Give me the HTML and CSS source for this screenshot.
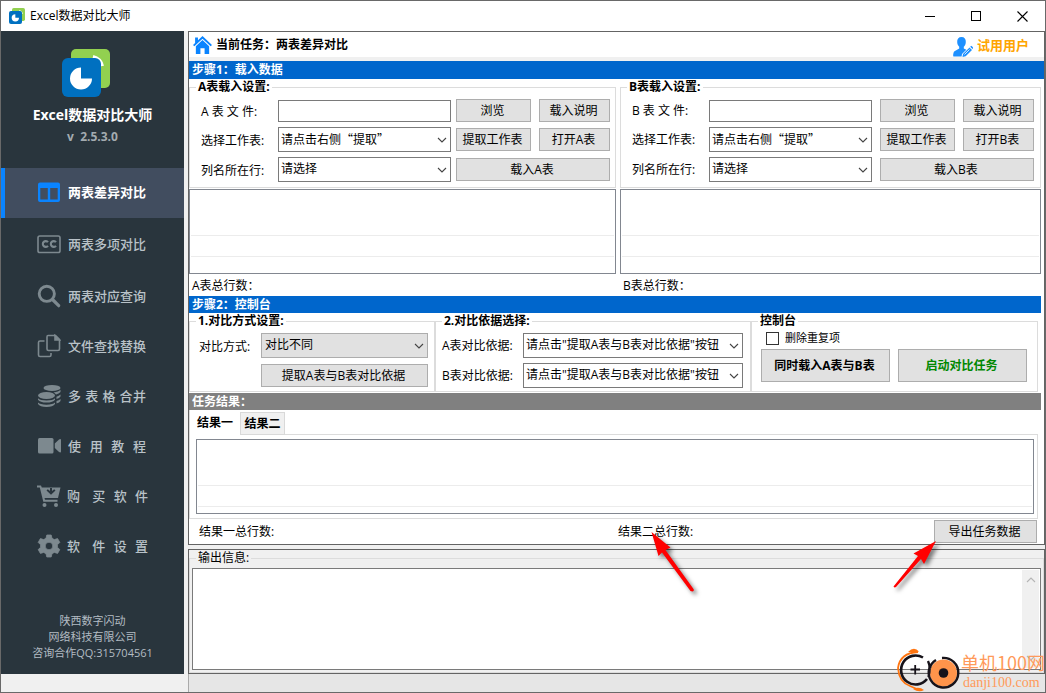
FILE: index.html
```
<!DOCTYPE html>
<html lang="zh-CN">
<head>
<meta charset="utf-8">
<title>Excel数据对比大师</title>
<link rel="stylesheet" href="styles.css">
</head>
<body>
<svg class="defs" width="0" height="0" aria-hidden="true">
  <symbol id="logo" viewBox="0 0 48 48">
    <rect x="9" y="0" width="39" height="39" rx="5" fill="#92d050"/>
    <path d="M31 7.500 A13 13 0 0 1 40.500 17" fill="none" stroke="#fff" stroke-width="3"/>
    <rect x="0" y="9" width="39" height="39" rx="6" fill="#0070c0"/>
    <path d="M19 18.500 V29.500 H30 A11 11 0 1 1 19 18.500Z" fill="#fff"/>
  </symbol>
  <symbol id="chevron" viewBox="0 0 10 6">
    <path d="M1 1 L5 5 L9 1" fill="none" stroke="currentColor" stroke-width="1.100"/>
  </symbol>
</svg>
<div class="window">
  <header class="titlebar">
    <svg class="app-icon"><use href="#logo"/></svg>
    <span class="app-name">Excel数据对比大师</span>
    <button class="win-btn" aria-label="最小化"><svg width="11" height="11" viewBox="0 0 11 11"><path d="M0 5.500H10" stroke="#000"/></svg></button>
    <button class="win-btn" aria-label="最大化"><svg width="11" height="11" viewBox="0 0 11 11"><rect x=".5" y=".5" width="9" height="9" fill="none" stroke="#000"/></svg></button>
    <button class="win-btn" aria-label="关闭"><svg width="11" height="11" viewBox="0 0 11 11"><path d="M.5.5l10 10M10.500.5l-10 10" stroke="#000" stroke-width="1.100"/></svg></button>
  </header>

  <div class="content">
    <div class="side-column">
    <aside class="sidebar">
      <svg class="logo"><use href="#logo"/></svg>
      <h1>Excel数据对比大师</h1>
      <p class="version">v&nbsp; 2.5.3.0</p>
      <nav>
        <a href="#" class="nav-item active">
          <svg viewBox="0 0 24 24"><path fill="#0a84ff" fill-rule="evenodd" d="M3 2.500H21Q23 2.500 23 4.500V20Q23 22 21 22H3Q1 22 1 20V4.500Q1 2.500 3 2.500ZM3.300 8V19.500H10.800V8ZM13.200 8V19.500H20.700V8Z"/></svg>
          <span>两表差异对比</span></a>
        <a href="#" class="nav-item">
          <svg viewBox="0 0 24 24"><g fill="none" stroke="currentColor"><rect x="1" y="4" width="22" height="16.500" rx="1.800" stroke-width="1.600"/><path stroke-width="2.100" d="M11 10.200A2.900 2.900 0 1 0 11 13.800M19 10.200A2.900 2.900 0 1 0 19 13.800"/></g></svg>
          <span>两表多项对比</span></a>
        <a href="#" class="nav-item">
          <svg viewBox="0 0 24 24"><circle cx="9.800" cy="9.800" r="7.600" fill="none" stroke="currentColor" stroke-width="2.900"/><path d="M15.500 15.500L21.700 21.700" stroke="currentColor" stroke-width="3.200" stroke-linecap="round"/></svg>
          <span>两表对应查询</span></a>
        <a href="#" class="nav-item">
          <svg viewBox="0 0 24 24"><g fill="none" stroke="currentColor" stroke-width="1.600"><path d="M11 1.500H18.500L22.500 5.500V15Q22.500 16.500 21 16.500H11.500Q10 16.500 10 15V3Q10 1.500 11 1.500Z"/><path d="M18 1.500V6H22.500Z" fill="currentColor"/><path d="M7.500 7H3Q1.500 7 1.500 8.500V21Q1.500 22.500 3 22.500H12.500Q14 22.500 14 21V19"/></g></svg>
          <span>文件查找替换</span></a>
        <a href="#" class="nav-item">
          <svg viewBox="0 0 24 24"><g fill="currentColor"><ellipse cx="15" cy="3.900" rx="8.500" ry="3"/><ellipse cx="9.500" cy="11.500" rx="8.500" ry="3.500"/><path d="M1 14.300Q3 16.500 9.500 16.500T18 14.300V15.800Q16 18.600 9.500 18.600T1 15.800ZM1 18.600Q3 20.700 9.500 20.700T18 18.600V20Q16 23 9.500 23T1 20ZM23.500 5.800V8Q22 9.800 19 10.400Q17.800 9 16.500 8.500Q21.500 8 23.500 5.800ZM23.500 10.600V12.500Q22.500 14.200 19.500 15V12.700Q22 12 23.500 10.600ZM23.500 15V17Q22.500 18.600 19.500 19.400V17Q22 16.400 23.500 15Z"/></g></svg>
          <span>多 表 格 合并</span></a>
        <a href="#" class="nav-item">
          <svg viewBox="0 0 24 24"><g fill="currentColor"><rect x="1" y="4" width="15.500" height="15.500" rx="1.500"/><path d="M17.800 9.500L22 5.500Q24 4.500 24 6V17.500Q24 19 22 18L17.800 14Z"/></g></svg>
          <span>使&nbsp; 用&nbsp; 教&nbsp; 程</span></a>
        <a href="#" class="nav-item shop">
          <svg viewBox="0 0 24 24"><g fill="currentColor"><path fill-rule="evenodd" d="M0 1.500H4L4.800 3.500H23.500L21 14H7.500L8 15.800H20.500V17.800H6.300L2.800 3.500H0ZM13 4V7L10.800 5.200L9.500 6.600L14 10.800L18.500 6.600L17.200 5.200L15 7V4Z"/><circle cx="7.500" cy="21" r="2"/><circle cx="19" cy="21" r="2"/></g></svg>
          <span>购&nbsp;&nbsp; 买&nbsp; 软&nbsp; 件</span></a>
        <a href="#" class="nav-item shop">
          <svg viewBox="0 0 24 24"><path fill="currentColor" fill-rule="evenodd" d="M9.800 1H14.200L15 4.300L17.300 5.600L20.600 4.600L22.800 8.400L20.400 10.800V13.300L22.800 15.600L20.600 19.400L17.300 18.400L15 19.700L14.200 23H9.800L9 19.700L6.700 18.400L3.400 19.400L1.200 15.600L3.600 13.300V10.800L1.200 8.400L3.400 4.600L6.700 5.600L9 4.300ZM12 8.200A3.800 3.800 0 1 0 12 15.800A3.800 3.800 0 1 0 12 8.200Z" stroke="currentColor" stroke-width=".8" stroke-linejoin="round"/></svg>
          <span>软&nbsp;&nbsp; 件&nbsp; 设&nbsp; 置</span></a>
      </nav>
      <footer class="company">陕西数字闪动<br>网络科技有限公司<br>咨询合作QQ:315704561</footer>
    </aside>
    </div>

    <main class="main">
      <section class="workspace">
        <div class="task-header">
          <svg class="home" viewBox="0 0 20 20"><g fill="#0a84ff"><path d="M2.200 1.500H5.200V5L2.200 7.600ZM10 0L20 9.500L18.600 10.900L10 2.900L1.400 10.900L0 9.500Z"/><path d="M10 4.200L17 10.700V19H12.200V13H7.800V19H3V10.700Z"/></g></svg>
          <strong>当前任务：两表差异对比</strong>
          <svg class="user" viewBox="0 0 20 20"><path fill="#1e90ff" d="M8.500 0C11.500 0 13 2 12.800 5C12.700 7.500 11.800 8.700 10.800 9.700V11.500L13.300 12.700L9 17L8.600 19.500H.5C0 19.500 0 15.500 1.500 14.300L6.200 11.500V9.700C5 8.500 4.200 7 4.200 5C4 2 5.500 0 8.500 0Z"/><path fill="#1e90ff" d="M10 17L16.500 10.500L19 13L12.700 19.300L9.500 20ZM17.200 9.800L18.300 8.700L20 10.300L19.700 12.300Z"/><path d="M11.500 17.500L16.500 12.500" stroke="#fff" stroke-width=".8"/></svg>
          <span class="user-name">试用用户</span>
        </div>
        <h2 class="bar step-one">步骤1：载入数据</h2>

        <div class="tables">
          <fieldset class="group load load-a">
            <legend>A表载入设置:</legend>
            <div class="row"><label for="fa">A 表 文 件:</label><input type="text" id="fa"><div class="actions"><button>浏览</button><button class="short">载入说明</button></div></div>
            <div class="row"><label for="sa">选择工作表:</label><div class="combo cjk"><select id="sa"><option>请点击右侧“提取”</option></select><svg><use href="#chevron"/></svg></div><div class="actions"><button>提取工作表</button><button class="short">打开A表</button></div></div>
            <div class="row"><label for="ca">列名所在行:</label><div class="combo"><select id="ca"><option>请选择</option></select><svg><use href="#chevron"/></svg></div><div class="actions"><button class="wide">载入A表</button></div></div>
          </fieldset>
          <fieldset class="group load load-b">
            <legend>B表载入设置:</legend>
            <div class="row"><label for="fb">B 表 文 件:</label><input type="text" id="fb"><div class="actions"><button>浏览</button><button class="short">载入说明</button></div></div>
            <div class="row"><label for="sb">选择工作表:</label><div class="combo cjk"><select id="sb"><option>请点击右侧“提取”</option></select><svg><use href="#chevron"/></svg></div><div class="actions"><button>提取工作表</button><button class="short">打开B表</button></div></div>
            <div class="row"><label for="cb">列名所在行:</label><div class="combo"><select id="cb"><option>请选择</option></select><svg><use href="#chevron"/></svg></div><div class="actions"><button class="wide">载入B表</button></div></div>
          </fieldset>
          <div class="list"><div class="line head"></div><div class="line"></div></div>
          <div class="list"><div class="line head"></div><div class="line"></div></div>
          <p class="total">A表总行数：</p>
          <p class="total">B表总行数：</p>
        </div>

        <h2 class="bar">步骤2：控制台</h2>
        <div class="console">
          <fieldset class="group method">
            <legend>1.对比方式设置:</legend>
            <div class="row"><label for="mode">对比方式:</label><div class="combo gray"><select id="mode"><option>对比不同</option></select><svg><use href="#chevron"/></svg></div></div>
            <div class="row end"><button>提取A表与B表对比依据</button></div>
          </fieldset>
          <fieldset class="group basis">
            <legend>2.对比依据选择:</legend>
            <div class="row"><label for="ba">A表对比依据:</label><div class="combo"><select id="ba"><option>请点击"提取A表与B表对比依据"按钮</option></select><svg><use href="#chevron"/></svg></div></div>
            <div class="row"><label for="bb">B表对比依据:</label><div class="combo"><select id="bb"><option>请点击"提取A表与B表对比依据"按钮</option></select><svg><use href="#chevron"/></svg></div></div>
          </fieldset>
          <fieldset class="group run">
            <legend>控制台</legend>
            <div class="check"><input type="checkbox" id="dedupe"><label for="dedupe">删除重复项</label></div>
            <div class="run-actions"><button>同时载入A表与B表</button><button class="start">启动对比任务</button></div>
          </fieldset>
        </div>

        <h2 class="bar results">任务结果：</h2>
        <div class="tabs" role="tablist">
          <button class="tab selected" role="tab">结果一</button><button class="tab" role="tab">结果二</button>
        </div>
        <div class="pane"><div class="list"><div class="line head"></div><div class="line"></div></div></div>
        <div class="summary"><span>结果一总行数:</span><span>结果二总行数:</span><button>导出任务数据</button></div>
      </section>

      <section class="output">
        <fieldset class="group">
          <legend><label for="log">输出信息:</label></legend>
          <div class="log"><textarea id="log"></textarea><div class="scroll"><svg class="up"><use href="#chevron"/></svg><svg><use href="#chevron"/></svg></div></div>
        </fieldset>
      </section>
      <div class="status"></div>
    </main>
  </div>

  <svg class="arrow arrow-left" viewBox="0 0 50 70" aria-hidden="true"><path d="M2.500 3L21.500 18.500L16.500 21L44.500 60Q45.500 62 43.500 62.500L41.500 62L13 23.500L9.500 27Z" fill="#f00"/></svg>
  <svg class="arrow arrow-right" viewBox="0 0 50 56" aria-hidden="true"><path d="M46 2L34 25L31 20L6 48Q4.500 49 3.500 47.500L28 17L23.500 14.500Z" fill="#f00"/></svg>
  <div class="watermark">
    <svg viewBox="0 0 64 44" aria-hidden="true">
      <path d="M21 4Q3 5 1 20Q2 34 13 38L22 42" fill="none" stroke="#ff7510" stroke-width="1.800"/>
      <path d="M11 4Q17 -2 22 3.500Q17 5 11 4ZM16 41Q22 38 27 42Q22 45 16 41Z" fill="#ff7510"/>
      <path d="M26 9.500A14.500 14.500 0 1 0 30 31" fill="none" stroke="#17131a" stroke-width="2.600"/>
      <path d="M13.500 21.500H23M18.200 17V26.500" stroke="#17131a" stroke-width="1.800"/>
      <circle cx="46.500" cy="25" r="13.500" fill="#ff944b"/>
      <path d="M31 13Q34 19 31.500 29M33 20Q34 15 39 12M45 10A14.800 14.800 0 1 1 32.500 20" fill="none" stroke="#17131a" stroke-width="2.400"/>
      <circle cx="46.500" cy="25" r="4.800" fill="#17131a"/>
    </svg>
    <div class="mark-text"><div class="site">单机100网</div><div class="url">danji100.com</div></div>
  </div>
</div>
</body>
</html>
```

FILE: styles.css
```
* { box-sizing: border-box; }
body {
  margin: 0;
  font: 12px/16px "Open Sans", "Noto Sans CJK SC", sans-serif;
  color: #000;
  background: #f0f0f0;
}
h1, h2, p { margin: 0; }
button, input, select, textarea { font: inherit; color: inherit; border-radius: 0; }
.defs { position: absolute; }
svg { display: block; flex: none; }

.window {
  position: relative;
  display: flex;
  flex-direction: column;
  min-height: 100vh;
  border: 1px solid #696969;
}
.titlebar {
  display: flex;
  align-items: center;
  height: 30px;
  padding-left: 8px;
  background: #fff;
}
.app-icon { width: 16px; height: 16px; margin-right: 5px; }
.app-name { flex: 1; }
.win-btn {
  display: flex;
  align-items: center;
  justify-content: center;
  width: 46px;
  height: 30px;
  padding: 0;
  border: 0;
  background: none;
}
.content { display: flex; flex: 1; }

/* Sidebar */
.side-column { display: flex; width: 183px; padding-bottom: 18px; }
.sidebar {
  display: flex;
  flex: 1;
  flex-direction: column;
  align-items: center;
  padding: 18px 0 13px;
  background: #29353d;
  color: #b3bcc3;
}
.logo { width: 48px; height: 48px; margin-right: 13px; }
.sidebar h1 { margin-top: 8px; font-size: 14px; line-height: 20px; color: #fff; }
.version { margin-top: 4px; font-weight: 700; color: #a3abb0; }
.sidebar nav { width: 100%; margin-top: 23px; }
.nav-item {
  display: flex;
  align-items: center;
  gap: 7px;
  height: 50px;
  padding: 0 0 2px 36px;
  font-size: 13px;
  font-weight: 500;
  color: #b9c2c8;
  text-decoration: none;
  white-space: nowrap;
}
.nav-item:nth-child(-n+2) { margin-bottom: 2px; }
.nav-item svg { width: 24px; height: 24px; color: #7d898f; }
.nav-item span { width: 78px; text-align-last: justify; }
.nav-item.active {
  padding-left: 32px;
  border-left: 4px solid #0a84ff;
  background: #414d5f;
  color: #fff;
  font-weight: 700;
}
.nav-item.shop { gap: 6px; }
.nav-item.shop span { width: 81px; }
.company { margin-top: auto; font-size: 11px; text-align: center; }

/* Main area */
.main { display: flex; flex: 1; flex-direction: column; min-width: 0; padding-left: 4px; }
.workspace { border: 1px solid #646464; background: #fff; }
.task-header {
  display: flex;
  align-items: center;
  height: 29px;
  padding: 1px 15px 0 4px;
  border-bottom: 4px solid #f0f0f0;
}
.home { width: 19px; height: 19px; margin-right: 4px; }
.user { width: 20px; height: 20px; margin: 3px 4px 0 auto; }
.user-name { font-size: 13px; font-weight: 700; color: #ffa500; }
.bar {
  margin-right: 3px;
  padding-left: 3px;
  font-size: 12px;
  line-height: 17px;
  color: #fff;
  background: #06c;
}
.bar.step-one { margin-right: 0; line-height: 18px; }
.bar.results { margin-top: 1px; background: #808080; }

.group { min-width: 0; margin: 0; padding: 0; border: 1px solid #dcdcdc; }
.group legend { margin-left: 6px; padding: 0 2px; font-weight: 700; }
.row { display: flex; align-items: center; }
button {
  height: 23px;
  padding: 0 2px 0 0;
  border: 1px solid #adadad;
  background: #e1e1e1;
  white-space: nowrap;
}
input[type="text"] { min-width: 0; height: 22px; border: 1px solid #7a7a7a; background: #fff; }
.combo { display: grid; flex: 1; align-items: center; min-width: 0; height: 25px; }
.combo select {
  grid-area: 1 / 1;
  appearance: none;
  width: 100%;
  height: 25px;
  padding: 0 2px 2px;
  border: 1px solid #7a7a7a;
  background: #fff;
}
.combo svg {
  grid-area: 1 / 1;
  justify-self: end;
  width: 10px;
  height: 6px;
  margin-right: 4px;
  color: #444;
  pointer-events: none;
}
.combo.cjk select { font-family: "Noto Sans CJK SC", sans-serif; }
.combo.gray select { padding-left: 3px; border-color: #adadad; background: #e1e1e1; }

.tables {
  display: grid;
  grid-template-columns: 427fr 421fr;
  column-gap: 4px;
  margin-right: 3px;
}
.load { margin-bottom: 1px; }
.load .row { margin-bottom: 5px; }
.load .row:first-of-type { margin-top: 4px; }
.load label { width: 77px; padding-top: 2px; }
.load input { flex: 1; }
.load-a { padding: 0 5px 0 11px; }
.load-a legend { margin-left: -5px; }
.load-b { padding: 0 6px 0 11px; }
.load-b legend { margin-left: -5px; }
.load-b label { padding-top: 0; }
.actions { display: flex; gap: 8px; width: 154px; margin-left: 5px; }
.load-b .actions { margin-left: 8px; }
.actions button { width: 75px; }
.actions .short { width: 71px; }
.actions .wide { width: 154px; }

.list { height: 85px; padding: 0 1px; border: 1px solid #828790; background: #fff; }
.line { height: 21px; border-bottom: 1px solid #ececec; }
.line.head { height: 46px; }
.total { padding: 4px 3px 2px; }

.console { display: grid; grid-template-columns: 246fr 316fr 287fr; margin-right: 6px; }
.console .row { height: 25px; margin: 4px 0 5px; }
.console .row + .row { margin: 0 0 3px; }
.method { padding: 0 6px 0 9px; }
.method legend { margin-left: -3px; }
.method label { width: 62px; padding-top: 3px; }
.method .end { justify-content: flex-end; }
.method .end button { width: 100%; margin-left: 62px; }
.basis { padding: 0 7px 0 6px; }
.basis legend { margin-left: 0; }
.basis label { width: 81px; }
.run { padding: 0 10px 0 9px; }
.run legend { margin-left: -3px; }
.check { display: flex; align-items: center; gap: 6px; padding: 1px 0 3px 5px; font-size: 11px; }
.check input { appearance: none; width: 13px; height: 13px; margin: 0; border: 1px solid #333; background: #fff; }
.run-actions { display: flex; gap: 8px; }
.run-actions button { flex: 1; height: 33px; font-weight: 700; }
.run-actions .start { color: #080; }

.tabs { display: flex; align-items: flex-end; height: 25px; }
.tab { width: 45px; height: 23px; padding: 0; border-color: #d9d9d9; background: #f0f0f0; font-weight: 700; }
.tab.selected {
  position: relative;
  z-index: 1;
  width: 51px;
  height: 25px;
  border-color: #dcdcdc;
  border-width: 0 0 0 1px;
  background: #fff;
}
.pane { margin: -1px 6px 0 0; padding: 4px 3px 4px 6px; border: 1px solid #dcdcdc; }
.pane .list { height: 75px; }
.summary { display: flex; align-items: center; min-height: 25px; padding: 0 7px 0 10px; }
.summary span { flex: 419 0 0; }
.summary span + span { flex: 316 0 0; }
.summary button { width: 103px; }

.output { display: flex; flex: 1; margin-top: 4px; border: 1px solid #646464; }
.output .group { display: flex; flex: 1; padding: 2px; }
.output legend { margin-left: 4px; font-weight: 400; }
.log { display: flex; flex: 1; border: 1px solid #7a7a7a; background: #fff; }
.log textarea { flex: 1; min-height: 80px; padding: 2px; border: 0; background: #fff; resize: none; }
.scroll {
  display: flex;
  flex-direction: column;
  align-items: center;
  justify-content: space-between;
  width: 17px;
  margin: 1px;
  padding: 7px 0;
  background: #f0f0f0;
}
.scroll svg { width: 10px; height: 6px; color: #b5b5b5; }
.scroll .up { transform: rotate(180deg); }
.status { height: 18px; border-left: 1px solid #aaa; background: #e6e6e6; }

/* Overlays */
.arrow { position: absolute; pointer-events: none; filter: drop-shadow(3px 3px 2px rgba(0, 0, 0, .5)); }
.arrow-left { left: 648px; top: 528px; width: 50px; height: 70px; }
.arrow-right { left: 889px; top: 538px; width: 50px; height: 56px; }
.watermark {
  position: absolute;
  right: 0;
  bottom: 0;
  display: flex;
  color: #ff9a5a;
}
.watermark svg { width: 64px; height: 44px; }
.site { font: 18px/28px "Noto Sans CJK SC", sans-serif; }
.url { padding-left: 2px; font: 14px/16px "Liberation Serif", serif; line-height: 14px; }
```
